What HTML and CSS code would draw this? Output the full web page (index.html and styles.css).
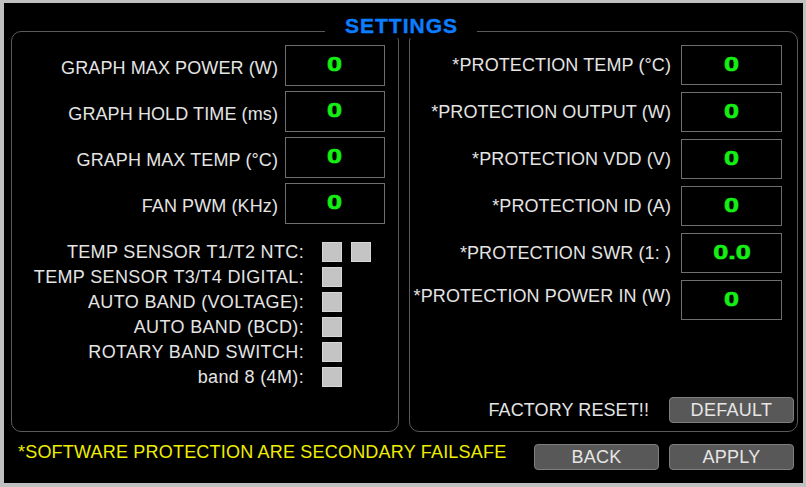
FILE: index.html
```html
<!DOCTYPE html>
<html>
<head>
<meta charset="utf-8">
<link rel="stylesheet" href="styles.css">
</head>
<body>
<div class="frame">
  <div class="title">SETTINGS</div>
  <div class="panels">
    <section class="panel panel-left">
      <div class="fields">
        <div class="field"><span class="label label-low">GRAPH MAX POWER (W)</span><div class="box"><span class="val">0</span></div></div>
        <div class="field"><span class="label label-low">GRAPH HOLD TIME (ms)</span><div class="box"><span class="val">0</span></div></div>
        <div class="field"><span class="label label-low">GRAPH MAX TEMP (°C)</span><div class="box"><span class="val">0</span></div></div>
        <div class="field"><span class="label label-low">FAN PWM (KHz)</span><div class="box"><span class="val">0</span></div></div>
      </div>
      <div class="checks">
        <div class="check-row"><span class="label">TEMP SENSOR T1/T2 NTC:</span><div class="cbs"><span class="cb"></span><span class="cb"></span></div></div>
        <div class="check-row"><span class="label">TEMP SENSOR T3/T4 DIGITAL:</span><div class="cbs"><span class="cb"></span></div></div>
        <div class="check-row"><span class="label">AUTO BAND (VOLTAGE):</span><div class="cbs"><span class="cb"></span></div></div>
        <div class="check-row"><span class="label">AUTO BAND (BCD):</span><div class="cbs"><span class="cb"></span></div></div>
        <div class="check-row"><span class="label">ROTARY BAND SWITCH:</span><div class="cbs"><span class="cb"></span></div></div>
        <div class="check-row"><span class="label">band 8 (4M):</span><div class="cbs"><span class="cb"></span></div></div>
      </div>
    </section>
    <section class="panel panel-right">
      <div class="fields fields-right">
        <div class="field"><span class="label">*PROTECTION TEMP (°C)</span><div class="box"><span class="val">0</span></div></div>
        <div class="field"><span class="label">*PROTECTION OUTPUT (W)</span><div class="box"><span class="val">0</span></div></div>
        <div class="field"><span class="label">*PROTECTION VDD (V)</span><div class="box"><span class="val">0</span></div></div>
        <div class="field"><span class="label">*PROTECTION ID (A)</span><div class="box"><span class="val">0</span></div></div>
        <div class="field"><span class="label">*PROTECTION SWR (1: )</span><div class="box"><span class="val">0.0</span></div></div>
        <div class="field"><span class="label label-high">*PROTECTION POWER IN (W)</span><div class="box"><span class="val">0</span></div></div>
      </div>
      <div class="reset-row">
        <span class="label">FACTORY RESET!!</span>
        <button class="btn">DEFAULT</button>
      </div>
    </section>
  </div>
  <div class="footer">
    <span class="note">*SOFTWARE PROTECTION ARE SECONDARY FAILSAFE</span>
    <div class="actions">
      <button class="btn">BACK</button>
      <button class="btn">APPLY</button>
    </div>
  </div>
</div>
</body>
</html>
```
FILE: styles.css
```css
html, body {
  margin: 0;
  padding: 0;
}
body {
  background: #c0c0c0;
  width: 806px;
  height: 487px;
  overflow: hidden;
  font-family: "Liberation Sans", Arial, sans-serif;
}
.frame {
  position: relative;
  margin: 3px 0 0 4px;
  width: 799px;
  height: 480px;
  background: #000;
  box-sizing: border-box;
  padding: 28px 5px 0 7px;
}
.title {
  position: absolute;
  top: 11px;
  left: 321px;
  padding: 0 19px 0 20px;
  background: #000;
  color: #0d7dff;
  font-weight: bold;
  font-size: 21px;
  line-height: 24px;
  letter-spacing: 1px;
  -webkit-text-stroke: 0.4px #0d7dff;
}
.panels {
  display: flex;
  gap: 10px;
  height: 401px;
}
.panel {
  box-sizing: border-box;
  border: 1px solid #5a5a5a;
  border-radius: 10px;
  height: 401px;
}
.panel-left {
  width: 388px;
  padding: 13px 13px 0 0;
}
.panel-right {
  width: 389px;
  padding: 13px 3px 8px 0;
  display: flex;
  flex-direction: column;
}
.fields {
  display: flex;
  flex-direction: column;
  gap: 5px;
}
.fields-right {
  gap: 7px;
  padding-right: 12px;
}
.field {
  display: flex;
  justify-content: flex-end;
  align-items: center;
  height: 41px;
  gap: 7px;
}
.fields-right .field {
  height: 40px;
  gap: 10px;
}
.fields-right .box {
  width: 101px;
}
.label {
  color: #e4e4e4;
  font-size: 18px;
  letter-spacing: 0.1px;
  white-space: nowrap;
}
.label-low {
  padding-top: 6px;
}
.label-high {
  margin-bottom: 8px;
}
.box {
  box-sizing: border-box;
  width: 100px;
  height: 100%;
  border: 1px solid #6e6e6e;
  display: flex;
  align-items: center;
  justify-content: center;
}
.val {
  display: inline-block;
  font-family: "Liberation Sans", Arial, sans-serif;
  font-weight: bold;
  font-size: 20px;
  line-height: 20px;
  color: #14f014;
  -webkit-text-stroke: 0.6px #14f014;
  padding-bottom: 3px;
  transform: scaleX(1.35);
}
.checks {
  margin-top: 18px;
  display: flex;
  flex-direction: column;
  gap: 5px;
}
.check-row {
  display: flex;
  justify-content: flex-end;
  align-items: center;
  height: 20px;
  gap: 18px;
}
.check-row .label {
  letter-spacing: 0.35px;
}
.cbs {
  display: flex;
  gap: 9px;
  width: 49px;
  margin-right: 14px;
}
.cb {
  box-sizing: border-box;
  width: 20px;
  height: 20px;
  background: #c4c4c4;
  border: 1px solid #d6d6d6;
}
.reset-row {
  margin-top: auto;
  display: flex;
  justify-content: flex-end;
  align-items: center;
  gap: 20px;
}
.btn {
  box-sizing: border-box;
  width: 125px;
  height: 26px;
  margin: 0;
  padding: 0;
  background: #585858;
  border: 1px solid #7e7e7e;
  border-radius: 4px;
  color: #e6e6e6;
  font-family: "Liberation Sans", Arial, sans-serif;
  font-size: 18px;
  line-height: 24px;
  letter-spacing: 0.3px;
}
.footer {
  display: flex;
  justify-content: space-between;
  align-items: flex-start;
  margin-top: 12px;
  padding: 0 4px 0 7px;
}
.note {
  color: #eeee00;
  font-size: 18px;
  line-height: 16px;
  letter-spacing: 0.2px;
  white-space: nowrap;
}
.actions {
  display: flex;
  gap: 10px;
}
```
